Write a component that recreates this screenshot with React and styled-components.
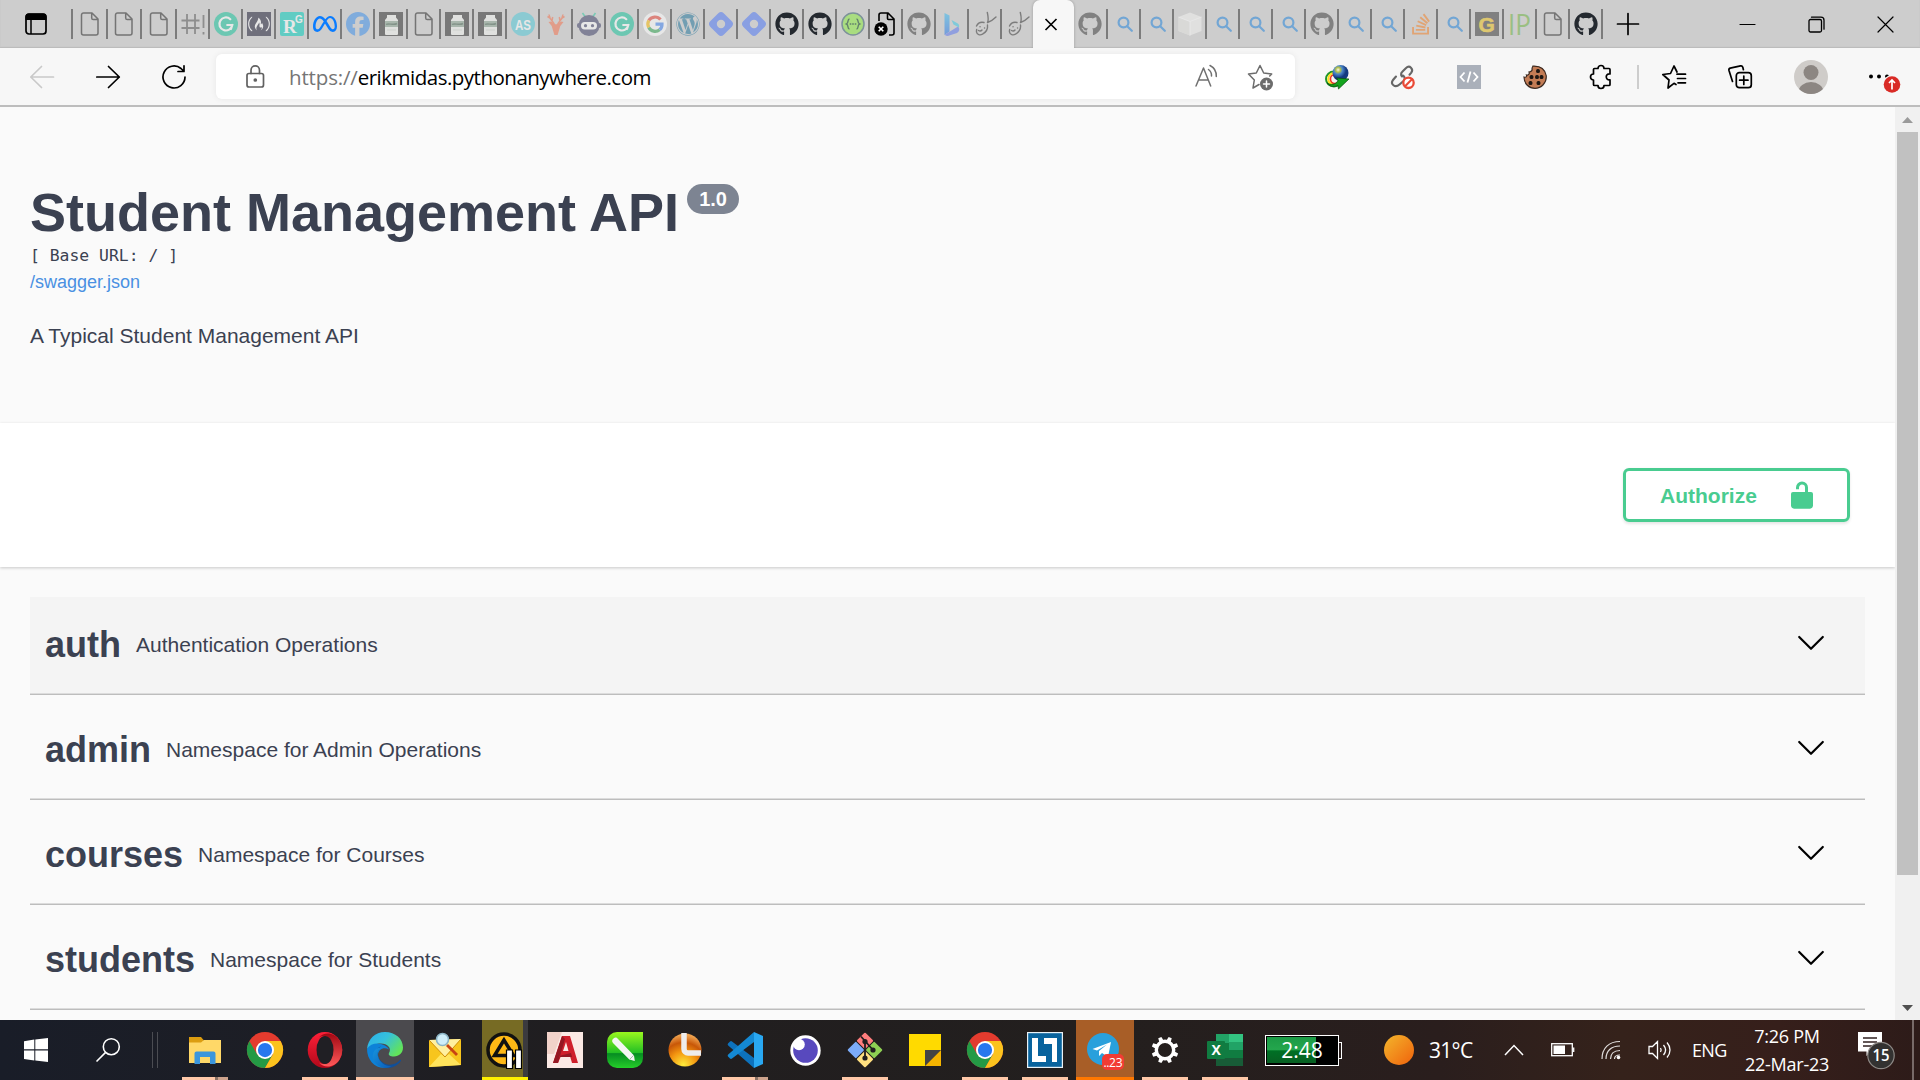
import React from 'react';
import styled, { createGlobalStyle, css } from 'styled-components';
import { FaGithub, FaWordpress, FaFreeCodeCamp, FaStackOverflow, FaFacebook, FaMeta } from 'react-icons/fa6';

const ui = '"Segoe UI", "Open Sans", "Noto Sans", sans-serif';
const arial = '"Liberation Sans", Arial, sans-serif';

const GlobalStyle = createGlobalStyle`
  * { box-sizing: border-box; }
  body { margin: 0; background: #fafafa; overflow: hidden; }
  svg { display: block; flex: none; overflow: visible; }
  button { font: inherit; }
`;

const Screen = styled.div`
  width: 1920px;
  height: 1080px;
  display: flex;
  flex-direction: column;
  overflow: hidden;
  font-family: ${ui};
`;

/* ---------- browser chrome ---------- */
const TabStrip = styled.div`
  height: 48px;
  display: flex;
  align-items: center;
  background: #cdcdcd;
  box-shadow: inset 0 -1px 1px #bbb;
  flex: none;
`;
const Workspace = styled.div`
  width: 71px;
  display: flex;
  padding-left: 24px;
`;
const Tab = styled.div`
  width: ${(p) => p.$w || 33}px;
  height: 30px;
  display: flex;
  align-items: center;
  justify-content: center;
  border-left: ${(p) => (p.$first ? 0 : '2px solid #7c7c7c')};
  flex: none;
  & > * { opacity: ${(p) => (p.$awake ? 1 : 0.52)}; }
`;
const ActiveTab = styled.div`
  width: 41px;
  height: 48px;
  display: flex;
  align-items: center;
  justify-content: center;
  padding-right: 6px;
  background: #f7f7f7;
  border-radius: 7px 7px 0 0;
  box-shadow: 0 0 3px rgba(0, 0, 0, 0.25);
  clip-path: inset(0 -3px 0 -3px);
  flex: none;
`;
const StripEnd = styled.div`
  height: 30px;
  border-left: 2px solid #7c7c7c;
  flex: 1;
  display: flex;
  align-items: center;
  padding: 0 26px 0 13px;
`;
const WindowControls = styled.div`
  margin-left: auto;
  display: flex;
  gap: 52px;
`;
const Toolbar = styled.div`
  height: 59px;
  display: flex;
  align-items: center;
  padding-left: 30px;
  background: #f7f7f7;
  border-bottom: 2px solid #bdbdbd;
  flex: none;
`;
const NavGroup = styled.div`
  display: flex;
  gap: 42px;
  width: 186px;
`;
const AddressBar = styled.div`
  width: 1079px;
  height: 45px;
  display: flex;
  align-items: center;
  background: #fff;
  border-radius: 6px;
  box-shadow: 0 0 6px rgba(0, 0, 0, 0.07);
  padding: 0 22px 0 27px;
`;
const Url = styled.span`
  margin-left: 22px;
  font-size: 20.5px;
  line-height: 28px;
  letter-spacing: -0.5px;
  color: #000;
  white-space: nowrap;
  flex: 1;
`;
const Scheme = styled.span`
  color: #757575;
  letter-spacing: -0.15px;
`;
const BarActions = styled.div`
  display: flex;
  gap: 27px;
`;
const Extensions = styled.div`
  display: flex;
  align-items: center;
  gap: 42px;
  margin-left: 30px;
`;
const Divider = styled.i`
  width: 2px;
  height: 24px;
  background: #cdcdcd;
  margin-left: 24px;
`;
const Profile = styled.div`
  display: flex;
  align-items: center;
  margin-left: 23px;
  gap: 42px;
`;

/* ---------- page ---------- */
const Viewport = styled.div`
  height: 913px;
  display: flex;
  overflow: hidden;
  background: #fafafa;
  flex: none;
`;
const Page = styled.main`
  width: 1895px;
  font-family: ${arial};
  color: #3b4151;
`;
const Info = styled.header`
  height: 316px;
  padding: 75px 30px 0;
`;
const TitleRow = styled.div`
  display: flex;
  align-items: flex-start;
  gap: 8px;
`;
const Title = styled.h1`
  margin: 0;
  font-size: 54px;
  line-height: 60px;
  white-space: nowrap;
`;
const Version = styled.span`
  margin-top: 2px;
  width: 52px;
  height: 30px;
  display: flex;
  align-items: center;
  justify-content: center;
  border-radius: 15px;
  background: #7d8492;
  color: #fff;
  font-size: 20px;
  font-weight: 700;
`;
const BaseUrl = styled.pre`
  margin: 1px 0 0;
  font: 16.4px/25px "DejaVu Sans Mono", monospace;
`;
const SpecLink = styled.a`
  display: block;
  margin-top: 1px;
  font-size: 18px;
  line-height: 27px;
  color: #4990e2;
`;
const Description = styled.p`
  margin: 25px 0 0;
  font-size: 21px;
  line-height: 30px;
`;
const SchemeBox = styled.section`
  height: 144px;
  display: flex;
  align-items: center;
  justify-content: flex-end;
  padding-right: 45px;
  background: #fff;
  box-shadow: 0 1px 3px rgba(0, 0, 0, 0.2);
`;
const Authorize = styled.button`
  width: 227px;
  height: 54px;
  display: flex;
  align-items: center;
  justify-content: space-between;
  padding: 0 34px;
  border: 3px solid #49cc90;
  border-radius: 6px;
  background: transparent;
  box-shadow: 0 1.5px 3px rgba(0, 0, 0, 0.1);
  color: #49cc90;
  font-size: 21px;
  font-weight: 700;
`;
const AuthorizeLabel = styled.span`
  padding-top: 2px;
`;
const Sections = styled.div`
  padding: 30px 30px 0;
  display: flex;
  flex-direction: column;
  gap: 7px;
`;
const Section = styled.div`
  height: 98px;
  display: flex;
  align-items: center;
  gap: 15px;
  padding: 0 41px 2px 15px;
  background: ${(p) => (p.$hover ? '#f4f4f4' : 'transparent')};
  border-bottom: 1px solid #bdbdbd;
  box-shadow: inset 0 -1px 0 #dcdcdc;
  & > svg { margin: 0 0 4px auto; }
`;
const Name = styled.h3`
  margin: 0;
  font-size: 36px;
  line-height: 40px;
`;
const Summary = styled.small`
  font-size: 21px;
  line-height: 26px;
`;
const Scrollbar = styled.div`
  width: 25px;
  padding: 10px 2px 9px;
  display: flex;
  flex-direction: column;
  align-items: center;
  background: #f0f0f0;
`;
const Thumb = styled.div`
  width: 21px;
  height: 743px;
  margin: 9px 0 auto;
  background: #c1c1c1;
`;

/* ---------- taskbar ---------- */
const Taskbar = styled.footer`
  height: 60px;
  display: flex;
  background: linear-gradient(90deg, #191d28 0, #1d1e25 300px, #201e20 560px, #231f1e 1100px, #2a1e1d 1440px, #35221b 1620px, #361f1b 1780px, #2d1b19 1920px);
  color: #fff;
  flex: none;
`;
const StartArea = styled.div`
  width: 175px;
  display: flex;
  align-items: center;
  padding-left: 24px;
  gap: 48px;
`;
const Grip = styled.i`
  width: 6px;
  height: 36px;
  margin-left: -16px;
  border: solid #4b4c52;
  border-width: 0 1.5px;
`;
const AppSlot = styled.div`
  width: 60px;
  display: flex;
  justify-content: center;
  flex: none;
`;
const AppInner = styled.div`
  width: ${(p) => p.$w || 46}px;
  display: flex;
  flex-direction: column;
  align-items: center;
  background: ${(p) => p.$bg || 'transparent'};
  border-bottom: 3px solid ${(p) => p.$line || 'transparent'};
  ${(p) => p.$stack && css`border-image: linear-gradient(90deg, #ffc8a8 32px, #8b7164 32px, #8b7164 34px, #cda38d 34px) 3;`}
  ${(p) => p.$stack && css`border-style: none none solid;`}
  padding-top: 3px;
  & > svg { margin: auto 0; }
`;
const BatteryClock = styled.div`
  width: 77px;
  margin: 0 42px 0 10px;
  display: flex;
  align-items: center;
`;
const BatteryBody = styled.div`
  width: 74px;
  height: 31px;
  border: 1.5px solid #fff;
  padding: 1px;
  background: #000;
  line-height: 26px;
  font-size: 21px;
  text-align: center;
`;
const BatteryFill = styled.div`
  height: 26px;
  background: linear-gradient(90deg, transparent 49px, #000 49px), linear-gradient(#1b9a45, #24a64d 48%, #007025 54%, #075f22);
`;
const BatteryTip = styled.i`
  width: 3px;
  height: 17px;
  border: 1px solid #fff;
  border-left: 0;
`;
const Weather = styled.div`
  display: flex;
  align-items: center;
  gap: 15px;
  width: 120px;
  font-size: 21px;
  letter-spacing: -0.7px;
  line-height: 24px;
`;
const Tray = styled.div`
  display: flex;
  align-items: center;
  gap: 26.5px;
  font-size: 18px;
  & > span { letter-spacing: -0.7px; margin-left: -6px; width: 34px; }
`;
const Clock = styled.div`
  width: 100px;
  margin-left: 11px;
  display: flex;
  flex-direction: column;
  align-items: center;
  font-size: 18px;
  line-height: 28px;
  padding-top: 2px;
  letter-spacing: -0.25px;
  white-space: nowrap;
`;
const Notice = styled.div`
  display: flex;
  align-items: center;
  margin-left: 20px;
`;
const DesktopEdge = styled.i`
  width: 2px;
  margin-left: auto;
  margin-right: 6px;
  background: #776a68;
`;

/* ---------- icons ---------- */
const Ic = ({ s = 24, h, vb, children, ...r }) => (
  <svg width={s} height={h || s} viewBox={vb || `0 0 ${s} ${h || s}`} fill="none" {...r}>{children}</svg>
);
const Line = (p) => <Ic stroke="#000" strokeWidth="1.7" strokeLinecap="round" strokeLinejoin="round" {...p} />;

const FileIcon = () => (
  <Ic stroke="#222" strokeWidth="1.5" strokeLinejoin="round">
    <path d="M5.500.9H14l6 6.200V21a2 2 0 0 1-2 2H5.500a2 2 0 0 1-2-2V2.900a2 2 0 0 1 2-2zM13.700 1v5a1.600 1.600 0 0 0 1.600 1.600H20" />
  </Ic>
);
const HashBang = () => (
  <Ic stroke="#555" strokeWidth="1.8"><path d="M6 2v20M14 2v20M.5 8.500h18M.5 16h18" /><path d="M22.500 3v13M22.500 20v2.500" /></Ic>
);
const Grammarly = () => (
  <Ic><circle cx="12" cy="12" r="12" fill="#15c39a" />
    <path d="M16.300 7.200A6.500 6.500 0 1 0 18.300 13H13.200M18.300 13l-1.300 4" stroke="#fff" strokeWidth="2.200" strokeLinecap="round" /></Ic>
);
const CodeCampBox = styled.span`
  display: flex;
  width: 24px;
  height: 24px;
  align-items: center;
  justify-content: center;
  background: #1b1b32;
  color: #fff;
  font-size: 22px;
`;
const Glyph = styled.span`
  display: flex;
  font-size: ${(p) => p.$size || 24}px;
  color: ${(p) => p.$c};
`;
const ResearchGate = () => (
  <Ic><rect width="24" height="24" rx="2" fill="#00ccbb" />
    <text x="3" y="21" fontFamily="Liberation Serif, serif" fontWeight="700" fontSize="19" fill="#fff">R</text>
    <text x="15" y="10.500" fontFamily="Liberation Sans, sans-serif" fontWeight="700" fontSize="10" fill="#fff">G</text></Ic>
);
const Bottle = () => (
  <Ic><rect width="24" height="24" fill="#2b2b2b" /><path d="M8 3h9v2.500L19 8v14a1 1 0 0 1-1 1H7a1 1 0 0 1-1-1V8l2-2.500z" fill="#f2f4f0" />
    <rect x="6" y="9" width="13" height="6" fill="#8aa391" /><path d="M7 12.500c3-2 7 1.500 11-1" stroke="#3f5f4b" strokeWidth="1.500" /><path d="M8 18h9" stroke="#cfd5cd" /></Ic>
);
const AsIcon = () => (
  <Ic><circle cx="12" cy="12" r="12" fill="#4fc8d8" />
    <text x="4" y="17.500" textLength="16" lengthAdjust="spacingAndGlyphs" fontFamily="Liberation Sans, sans-serif" fontWeight="700" fontSize="15" fill="#fff">AS</text></Ic>
);
const Deer = () => (
  <Ic><path d="M7 9.500l5 3 5-3 2.500.5-3.200 4L13.600 23h-3.200L7.700 14 4.500 10z" fill="#f4714c" />
    <path d="M10 12C9.500 9.500 6 9 5 2.500M6 6L3.500 4.500M8 8.500L8.700 5M14 12c.5-2.500 4-3 5-9.500M18 6l2.500-1.500M16 8.500L15.300 5" stroke="#f4714c" strokeWidth="1.500" /></Ic>
);
const Robot = () => (
  <Ic><path d="M8 4.500L5.500 1M16 4.500L18.500 1" stroke="#2ec9a0" strokeWidth="1.600" /><circle cx="12" cy="13.500" r="10.500" fill="#3c3e66" />
    <rect x="0" y="11" width="24" height="5" rx="2" fill="#3c3e66" /><rect x="4" y="10" width="16" height="7.500" rx="3.700" fill="#fff" />
    <circle cx="8.500" cy="13.700" r="1.600" fill="#3c3e66" /><circle cx="15.500" cy="13.700" r="1.600" fill="#3c3e66" /></Ic>
);
const Google = () => (
  <Ic><circle cx="12" cy="12" r="12" fill="#fff" /><g strokeWidth="3.200"><path d="M17.500 7.600A7.200 7.200 0 0 0 5.800 8.500" stroke="#ea4335" />
    <path d="M5.800 8.500a7.200 7.200 0 0 0 0 7" stroke="#fbbc05" /><path d="M5.800 15.500a7.200 7.200 0 0 0 10.800 2.300" stroke="#34a853" />
    <path d="M12.500 12.200h6.500a7.200 7.200 0 0 1-2.400 5.600" stroke="#4285f4" /></g></Ic>
);
const Hashnode = () => (
  <Ic><path fillRule="evenodd" fill="#4a74f5" d="M9.300 1.200a4 4 0 0 1 5.400 0l8.100 8.100a4 4 0 0 1 0 5.400l-8.100 8.100a4 4 0 0 1-5.400 0L1.200 14.700a4 4 0 0 1 0-5.400zM12 7.800a4.200 4.200 0 1 0 0 8.400 4.200 4.200 0 0 0 0-8.400z" /></Ic>
);
const Swagger = () => (
  <Ic><circle cx="12" cy="12" r="11" fill="#a9dd80" stroke="#7d929a" strokeWidth="1.500" />
    <path d="M8.500 7C6 7 8 11 5.500 12 8 13 6 17 8.500 17M15.500 7c2.500 0 .5 4 3 5-2.500 1-.5 5-3 5" stroke="#62806c" strokeWidth="1.400" />
    <path d="M8.700 12h1.600M11.200 12h1.600M13.700 12h1.600" stroke="#62806c" strokeWidth="1.600" /></Ic>
);
const FileError = () => (
  <Ic><path d="M5 9V3a2 2 0 0 1 2-2h7l6 6v14a2 2 0 0 1-2 2h-3M13.500 1v5.500a1 1 0 0 0 1 1H20" stroke="#000" strokeWidth="1.600" />
    <circle cx="7" cy="17" r="6.700" fill="#000" /><path d="M4.700 14.700l4.600 4.600M9.300 14.700l-4.600 4.600" stroke="#fff" strokeWidth="1.600" /></Ic>
);
const Bing = () => (
  <Ic><defs><linearGradient id="bing" x1="0" y1="0" x2="0" y2="1"><stop stopColor="#37bdf2" /><stop offset="1" stopColor="#2670e8" /></linearGradient></defs>
    <path d="M4.500 1l5 2.500v16L4.500 23z" fill="url(#bing)" /><path d="M4.600 22.700L18 14.500a4 4 0 0 1-1 6.500L10 23.300a5 5 0 0 1-5.400-.6z" fill="#5a76f0" />
    <path d="M11.500 8l5.500 3a4 4 0 0 1 2 4.500l-5.500-3z" fill="#37c9e6" /></Ic>
);
const Carrot = () => (
  <Ic stroke="#333" strokeWidth="1.400" strokeLinecap="round"><path d="M3.500 14C5 11 8 9.800 11 10.500M14.500 13c.5 4-2 7.500-5 9.200-2.500 1.300-5.500.6-6-2.200-.1-1 0-1.700.2-2.500M14.500 10.500c1.500-3 .5-6.500-.2-10M14.500 10.500c3-1 6-3 8.500-5.500" />
    <path d="M7 14.700h.1M11.500 16h.1M5.500 18.500c1.200.8 2.700.5 3.500-.5" /></Ic>
);
const TabSearch = () => <Ic stroke="#2083dc" strokeWidth="2.200" strokeLinecap="round"><circle cx="11.500" cy="10.500" r="4.900" /><path d="M15.200 14.300l4.600 4.500" /></Ic>;
const Cube = () => (
  <Ic><path d="M12 .5L23.500 5v14L12 23.500.5 19V5z" fill="#f3f3f1" /><path d="M12 9.500V23.500L.5 19V5z" fill="#e4e4e2" /><path d="M.5 5L12 9.500 23.500 5M12 9.500v14" stroke="#fff" /></Ic>
);
const Geeks = () => (
  <Ic><rect width="24" height="24" fill="#3a3a3a" /><text x="3.500" y="19.500" fontFamily="Liberation Sans, sans-serif" fontWeight="700" fontSize="21" fill="#efc31b" stroke="#efc31b" strokeWidth=".6">G</text></Ic>
);
const IpIcon = () => (
  <Ic><text x="0" y="22.500" textLength="23" lengthAdjust="spacingAndGlyphs" fontFamily="Open Sans, sans-serif" fontSize="30" fill="#6db33f">IP</text></Ic>
);
const Gh = ({ dark }) => <Glyph $c={dark ? '#24292f' : '#3c3c3c'}><FaGithub /></Glyph>;

const tabsBefore = [
  [<FileIcon />, 0, 35], [<FileIcon />, 0, 34], [<FileIcon />, 0, 35], [<HashBang />], [<Grammarly />],
  [<CodeCampBox><FaFreeCodeCamp /></CodeCampBox>], [<ResearchGate />], [<Glyph $c="#0a7cff"><FaMeta /></Glyph>, 1],
  [<Glyph $c="#3b8eea"><FaFacebook /></Glyph>], [<Bottle />], [<FileIcon />], [<Bottle />], [<Bottle />], [<AsIcon />], [<Deer />],
  [<Robot />], [<Grammarly />], [<Google />], [<Glyph $c="#21759b"><FaWordpress /></Glyph>], [<Hashnode />], [<Hashnode />],
  [<Gh dark />, 1], [<Gh dark />, 1], [<Swagger />, 1], [<FileError />, 1], [<Gh />], [<Bing />], [<Carrot />], [<Carrot />],
];
const tabsAfter = [
  [<Gh />, 0, 32], [<TabSearch />], [<TabSearch />], [<Cube />], [<TabSearch />], [<TabSearch />], [<TabSearch />], [<Gh />],
  [<TabSearch />], [<TabSearch />], [<Glyph $c="#f48024"><FaStackOverflow /></Glyph>], [<TabSearch />], [<Geeks />], [<IpIcon />],
  [<FileIcon />], [<Gh dark />, 1],
];

const Chrome = () => (
  <Ic s={36} vb="0 0 48 48"><circle cx="24" cy="24" r="24" fill="#e33b2e" />
    <path d="M3.200 12A24 24 0 0 0 24 48l10.400-18L24 36 13.600 30z" fill="#249a45" /><path d="M24 48a24 24 0 0 0 20.800-36H24l10.400 18z" fill="#fcc31e" />
    <circle cx="24" cy="24" r="12" fill="#fff" /><circle cx="24" cy="24" r="9.500" fill="#2877ee" /></Ic>
);
const Opera = () => (
  <Ic s={36}><defs><linearGradient id="op1" x1="0" y1="0" x2="0" y2="1"><stop stopColor="#ff2038" /><stop offset="1" stopColor="#b0081a" /></linearGradient>
    <linearGradient id="op2" x1="0" y1="0" x2="0" y2="1"><stop stopColor="#a00712" /><stop offset="1" stopColor="#ff5a5a" /></linearGradient></defs>
    <ellipse cx="18" cy="18" rx="17.300" ry="18" fill="url(#op1)" /><path d="M12 5.500C17-1 28 .5 32.500 8.500a19 19 0 0 1 0 19C28 35.500 17 37 12 30.500c9 5 14-3 14-12.500S21 .5 12 5.500z" fill="url(#op2)" />
    <ellipse cx="18" cy="18" rx="8.500" ry="14" fill="#201f24" /></Ic>
);
const Edge = () => (
  <Ic s={36}><defs><linearGradient id="ed1" x1="0" y1="0" x2="1" y2=".6"><stop stopColor="#2aaeea" /><stop offset=".5" stopColor="#35c1dc" /><stop offset="1" stopColor="#62e35a" /></linearGradient>
    <linearGradient id="ed2" x1="0" y1="0" x2="1" y2="1"><stop stopColor="#1794dd" /><stop offset="1" stopColor="#0a5cb8" /></linearGradient></defs>
    <path d="M0 17C1 7 8 0 18 0c10.500 0 18 7 18 15.500C36 21 32 24.500 27 24.500c-4 0-6-1.500-5-3.500 3-5-1.500-9.500-8-9.500C8 11.500 3 14 0 17z" fill="url(#ed1)" />
    <path d="M0 17c3-5 9-6.500 14-5 4 1 7 3 8 5.500-5-3-10.500-.5-11 5C10.700 29 17 34 24 34.500 11 39.500 0 30 0 17z" fill="#0d82d8" />
    <path d="M14 14.500c-4 3-4.500 10 0 14.500 5 5 14 5 19-1 .8-.8 1.300.1.800 1C30.500 34 24 37 17 35.500 9 33 5.500 26 8 20c1.200-3 3.500-5 6-5.500z" fill="#114f98" />
    <path d="M15 15.500c-3.500 1.500-5 5-4 9 1.500 6 7.500 10 13.500 9.700-2.300 1.500-5.500 1.900-8 1.500C8 34 4 27 6.500 20.500 8 17 11 15 15 15.500z" fill="url(#ed2)" /></Ic>
);
const Folder = () => (
  <Ic s={32} h={27}><path d="M0 0h12l3 3.500V8H0z" fill="#dc9d10" /><path d="M0 5.500h12l3-2.500h17v23H0z" fill="#ffd868" /><path d="M5.500 27V16.500a2 2 0 0 1 2-2h17a2 2 0 0 1 2 2V27H21v-7h-10v7z" fill="#3b96dc" /></Ic>
);
const MailSearch = () => (
  <Ic s={36}><path d="M2 8l32-1v26l-32 2z" fill="#f7c51d" /><path d="M2 35l12-13 4 3 4-3 12 11z" fill="#ffe45c" /><path d="M2 8l16 17L34 7" stroke="#d08e08" fill="#fff0a0" />
    <path d="M20 13l10 10" stroke="#c84313" strokeWidth="2.800" /><circle cx="15.500" cy="7.500" r="6" fill="#cfeefa" stroke="#8bb3c4" strokeWidth="1.600" /></Ic>
);
const PausedApp = () => (
  <Ic s={46} h={38}><circle cx="22" cy="19" r="16" fill="#ffb915" stroke="#111" strokeWidth="3.500" /><path d="M22 9L12.500 24.500h19z" fill="#ffb915" stroke="#111" strokeWidth="3.500" />
    <path d="M24.500 19h6v18.500h-6zM33.500 19h6v18.500h-6z" fill="#fff" stroke="#000" strokeWidth="1.200" /></Ic>
);
const Autocad = () => (
  <Ic s={36}><rect width="36" height="36" fill="#fbe9e4" /><path d="M0 0h15L7 22H0z" fill="#f1d2c9" /><path d="M6 31L15 4h8l8 27h-6l-2-7H14l-3 7zM16 19h5.500L19 10z" fill="#cf1f2b" fillRule="evenodd" />
    <path d="M15 4L6 31h5l7-24zM12 24l12-3 1 4H13z" fill="#951823" /></Ic>
);
const Corel = () => (
  <Ic s={36}><defs><linearGradient id="cd" x1="0" y1="0" x2="0" y2="1"><stop stopColor="#99f71e" /><stop offset=".58" stopColor="#22bf25" /><stop offset=".6" stopColor="#068c22" /><stop offset="1" stopColor="#25ce29" /></linearGradient></defs>
    <path d="M10 0h26v26a10 10 0 0 1-10 10H10A10 10 0 0 1 0 26V10A10 10 0 0 1 10 0z" fill="url(#cd)" /><path d="M6 11a3 3 0 0 1 5-4l16 16.500.8 5.500-5.500-1.500z" fill="#f4f6f4" /><path d="M23 27l4-4" stroke="#a9bba9" /></Ic>
);
const OrangeClock = () => (
  <Ic s={34}><defs><radialGradient id="oc" cx=".45" cy=".95" r=".9"><stop stopColor="#ffec3c" /><stop offset=".45" stopColor="#f39410" /><stop offset=".75" stopColor="#c85708" /><stop offset="1" stopColor="#eea04c" /></radialGradient></defs>
    <circle cx="17" cy="17" r="16.500" fill="url(#oc)" /><path d="M16 0v16a4 4 0 0 0 4 4H33" stroke="#eeeceb" strokeWidth="5.500" /></Ic>
);
const VsCode = () => (
  <Ic s={36}><path d="M1 11.500l2-2a1.500 1.500 0 0 1 2 0L27 26v10L1.200 13.500a1.500 1.500 0 0 1-.2-2z" fill="#0d72bd" /><path d="M1 24.500l2 2a1.500 1.500 0 0 0 2 0L27 10V0L1.200 22.500a1.500 1.500 0 0 0-.2 2z" fill="#1489d3" />
    <path d="M27 0l9 4v28l-9 4z" fill="#29a8f2" /></Ic>
);
const Insomnia = () => (
  <Ic s={31}><circle cx="15.500" cy="15.500" r="15.200" fill="#fff" /><circle cx="15.500" cy="15.500" r="12.300" fill="#5849be" /><circle cx="9" cy="9.500" r="5.800" fill="#fff" /></Ic>
);
const Git = () => (
  <Ic s={36}><g transform="rotate(45 18 18)"><rect x="5.500" y="5.500" width="12" height="12" rx="1" fill="#ff7d7d" /><rect x="18.500" y="5.500" width="12" height="12" rx="1" fill="#8ed053" />
    <rect x="5.500" y="18.500" width="12" height="12" rx="1" fill="#7cacf8" /><rect x="18.500" y="18.500" width="12" height="12" rx="1" fill="#ffe080" /></g>
    <path d="M14 4.500l4 4.500v17M18 9l8 9" stroke="#211e1f" strokeWidth="1.800" /><circle cx="18" cy="9.500" r="2.600" fill="#211e1f" /><circle cx="26" cy="18" r="2.600" fill="#211e1f" /><circle cx="18" cy="26" r="2.600" fill="#211e1f" /></Ic>
);
const Sticky = () => <Ic s={32}><path d="M0 0h32v16H16v16H0z" fill="#ffda00" /><path d="M16 16h16L16 32z" fill="#444" /><path d="M32 16v16H16z" fill="#f5b400" /></Ic>;
const LApp = () => (
  <Ic s={36}><rect x=".6" y=".6" width="34.800" height="34.800" fill="#08639d" stroke="#e9f2f7" strokeWidth="1.200" /><path d="M5 6h6v18h8v6H5zM17 6h13v24h-5V12h-8z" fill="#fff" /></Ic>
);
const Telegram = () => (
  <Ic s={38}><circle cx="17" cy="18" r="16" fill="#29a0dc" /><path d="M6.500 18L25 11l-3 15-6-4-3 3v-5l8-6.500-10 6z" fill="#fff" />
    <rect x="16" y="23" width="22" height="16" rx="5" fill="#f23c34" /><text x="17.500" y="35.500" textLength="19" fontFamily="Open Sans, sans-serif" fontSize="12" fill="#fff">..23</text></Ic>
);
const Gear = () => (
  <Ic s={28}><circle cx="14" cy="14" r="8.700" stroke="#fff" strokeWidth="3.400" />
    {[22.5, 67.5, 112.5, 157.5, 202.5, 247.5, 292.5, 337.5].map((a) => <path key={a} d="M11.700 5l.6-4.500h3.400l.6 4.500z" fill="#fff" transform={`rotate(${a} 14 14)`} />)}</Ic>
);
const Excel = () => (
  <Ic s={36} h={32}><path d="M9 0h13v9H9z" fill="#22a366" /><path d="M22 0h14v9H22z" fill="#33c481" /><path d="M9 9h13v15H9z" fill="#107c41" /><path d="M22 8h14v8H22z" fill="#21a366" /><path d="M22 16h14v8H22z" fill="#107c41" /><path d="M9 24h27v8H9z" fill="#185c37" />
    <rect y="7" width="18" height="18" rx="1" fill="#107c41" /><text x="4.500" y="21" fontFamily="Open Sans, sans-serif" fontWeight="700" fontSize="14" fill="#fff">X</text></Ic>
);

const peach = '#ffc8a8';
const apps = [
  { icon: <Folder />, line: peach, stack: true }, { icon: <Chrome /> }, { icon: <Opera />, line: peach },
  { icon: <Edge />, w: 58, bg: '#4b4a4e', line: peach }, { icon: <MailSearch /> },
  { icon: <PausedApp />, bg: 'linear-gradient(90deg, #776b24 41px, #3b3a3e 41px)', line: '#fff000' },
  { icon: <Autocad /> }, { icon: <Corel /> }, { icon: <OrangeClock /> }, { icon: <VsCode />, line: peach, stack: true },
  { icon: <Insomnia /> }, { icon: <Git />, line: peach }, { icon: <Sticky /> }, { icon: <Chrome />, line: peach },
  { icon: <LApp />, line: peach }, { icon: <Telegram />, w: 58, bg: '#a85e27', line: '#ff7800' },
  { icon: <Gear />, line: peach }, { icon: <Excel />, line: peach },
];

const sections = [
  ['auth', 'Authentication Operations'],
  ['admin', 'Namespace for Admin Operations'],
  ['courses', 'Namespace for Courses'],
  ['students', 'Namespace for Students'],
];

const renderTab = (skipFirst) => ([icon, awake, w], i) => (
  <Tab key={i} $awake={awake} $w={w} $first={skipFirst && i === 0}>{icon}</Tab>
);

function BrowserTop() {
  return (
    <>
      <TabStrip>
        <Workspace>
          <Ic><rect x="2" y="2" width="20" height="20" rx="3" stroke="#000" strokeWidth="1.700" /><path d="M1.500 8V4.500a3 3 0 0 1 3-3h15a3 3 0 0 1 3 3V8z" fill="#000" /><path d="M7 8v14" stroke="#000" strokeWidth="1.500" /></Ic>
        </Workspace>
        {tabsBefore.map(renderTab(false))}
        <ActiveTab><Line s={14} strokeLinecap="butt"><path d="M1.500 2l11 11M12.500 2L1.500 13" /></Line></ActiveTab>
        {tabsAfter.map(renderTab(true))}
        <StripEnd>
          <Line><path d="M12 1.500v21M1.500 12h21" /></Line>
          <WindowControls>
            <Line s={17} strokeWidth="1.200"><path d="M1 8.500h15" /></Line>
            <Line s={17} strokeWidth="1.300"><rect x="1" y="3.500" width="12.500" height="12.500" rx="1.500" /><path d="M3.500 1.200H13a3 3 0 0 1 3 3v9" /></Line>
            <Line s={17} strokeWidth="1.200"><path d="M1 1l15 15M16 1L1 16" /></Line>
          </WindowControls>
        </StripEnd>
      </TabStrip>
      <Toolbar>
        <NavGroup>
          <Line stroke="#c9c9c9"><path d="M23.500 12H.8M11.500 1.500L.8 12l10.700 10.500" /></Line>
          <Line><path d="M.8 12h22.500M12.500 1.500L23.300 12 12.500 22.500" /></Line>
          <Line><path d="M23 12a11 11 0 1 1-4-8.500l2.800 2.700M22 .8v5.700h-6" /></Line>
        </NavGroup>
        <AddressBar>
          <Line stroke="#616161"><rect x="4" y="8.500" width="16.500" height="13.500" rx="2" /><path d="M8 8.500V5.200a4.200 4.200 0 0 1 8.500 0v3.300" /><circle cx="12.300" cy="15" r="1" fill="#616161" /></Line>
          <Url><Scheme>https://</Scheme>erikmidas.pythonanywhere.com</Url>
          <BarActions>
            <Line s={26} stroke="#707070" strokeWidth="1.500"><path d="M2 22L9.500 4l7.200 18M4.700 16h9.500M14.500 5.500c2 1.500 3.200 4 3 6.500M16 1.500c4 2 6.500 6 6.300 11" /></Line>
            <Line s={26} stroke="#6c6c6c" strokeWidth="1.500"><path d="M12 20.500l-6 3.500 1.300-8L1.500 10l7.800-1L13 1.500l3.700 7.500 8 1-2 2" /><circle cx="19.500" cy="20" r="6.500" fill="#6c6c6c" stroke="none" /><path d="M19.500 17v6M16.500 20h6" stroke="#fff" /></Line>
          </BarActions>
        </AddressBar>
        <Extensions>
          <Ic><defs><radialGradient id="globe" cx=".35" cy=".3"><stop stopColor="#f3f7e8" /><stop offset=".3" stopColor="#b3bf4a" /><stop offset=".55" stopColor="#4b86c9" /><stop offset="1" stopColor="#143a80" /></radialGradient></defs>
            <ellipse cx="9" cy="14" rx="8" ry="7.500" fill="#f7f7f7" stroke="#21952c" strokeWidth="2" /><ellipse cx="9.500" cy="14" rx="6.300" ry="6" stroke="#ffe21a" strokeWidth="2" /><ellipse cx="10" cy="14" rx="4.600" ry="4.500" stroke="#ee3a20" strokeWidth="1.700" />
            <circle cx="15.500" cy="8" r="8" fill="url(#globe)" />
            <path d="M2 18c4 2.500 9 1.500 11-2.500l-1.500-2.500L24 14 13.500 24l-.5-3.500C8 22.500 4 21 2 18z" fill="#14a41d" stroke="#0a4a10" strokeWidth=".7" /></Ic>
          <Ic stroke="#666" strokeWidth="2.100" strokeLinecap="round"><path d="M11 11.500c-1.500-1.500-1-3.500.3-4.700l3.500-3.600c4-3.700 8 .8 5.500 4.500l-1.800 2M11.800 10.500c2.500 1.500 2.300 4 .7 5.500L8.500 19.500C4 23.500-1 19 2 15l3-3.500" /><circle cx="17.500" cy="17.800" r="5.200" fill="#fff" stroke="#ea4a37" strokeWidth="2.300" /><path d="M14.300 21l6.400-6.400" stroke="#ea4a37" /></Ic>
          <Ic><rect width="24" height="24" fill="#aab0ba" /><path d="M7.500 7.500L3.500 12l4 4.500M16.500 7.500l4 4.500-4 4.500M13.500 6.500l-3 11" stroke="#fff" strokeWidth="1.800" /></Ic>
          <Ic><path d="M10 1c2 .3 11-1.500 13.200 9.500C24 18 18 23.300 12 23.300S1.200 19 1 12c2 .7 3-.3 2.500-2C5 10.500 7 9 6 7c2-.2 3.500-1.500 3-3C9 3 9.300 2 10 1z" fill="#c37c55" stroke="#3c2a21" strokeWidth="1.200" />
            {[[15, 6], [18.5, 12], [8.5, 12], [14, 12], [7.5, 18], [15.5, 18]].map(([x, y]) => <rect key={`${x}-${y}`} x={x - 1.9} y={y - 1.9} width="3.800" height="3.800" rx="1.500" fill="#1d1713" />)}</Ic>
          <Line><path d="M9 3.500a3 3 0 0 1 6 0h5a1 1 0 0 1 1 1V9c-5-.8-5 6.500 0 5.800v4.700a1 1 0 0 1-1 1h-5a3 3 0 0 1-6 0H5.500a1 1 0 0 1-1-1V15a3 3 0 0 1 0-6V4.500a1 1 0 0 1 1-1z" /></Line>
        </Extensions>
        <Divider />
        <Profile>
          <Line><path d="M15 9.200h8.500M15.500 13.500h8M16 17.800h7.500M14 19.500L12 18.300 6 23l1-8L.8 9.500 8.500 8.500 12 1l3 6" /></Line>
          <Line><path d="M4.500 16.500L1 5.500a2 2 0 0 1 1.200-2.400L12.500.9a2 2 0 0 1 2.300 1.300l.6 2.500" /><rect x="8.300" y="7.700" width="15" height="15" rx="3" /><path d="M15.800 11v8.400M11.600 15.200H20" /></Line>
          <Ic s={34}><defs><clipPath id="av"><circle cx="17" cy="17" r="17" /></clipPath></defs><g clipPath="url(#av)"><rect width="34" height="34" fill="#cfccc9" /><circle cx="17" cy="12.500" r="7.500" fill="#8c8682" /><ellipse cx="17" cy="32" rx="12.500" ry="10" fill="#8c8682" /></g></Ic>
          <Ic s={32} h={34}><g fill="#000"><circle cx="1" cy="16.500" r="2" /><circle cx="9" cy="16.500" r="2" /><circle cx="17" cy="16.500" r="2" /></g><circle cx="22" cy="24.500" r="9.500" fill="#f7f7f7" /><circle cx="22" cy="24.500" r="8.300" fill="#d92b26" /><path d="M22 29.500v-9M19 23l3-3 3 3" stroke="#fff" strokeWidth="1.700" /></Ic>
        </Profile>
      </Toolbar>
    </>
  );
}

function SwaggerPage() {
  return (
    <Viewport>
      <Page>
        <Info>
          <TitleRow><Title>Student Management API</Title><Version>1.0</Version></TitleRow>
          <BaseUrl>[ Base URL: / ]</BaseUrl>
          <SpecLink>/swagger.json</SpecLink>
          <Description>A Typical Student Management API</Description>
        </Info>
        <SchemeBox>
          <Authorize>
            <AuthorizeLabel>Authorize</AuthorizeLabel>
            <Ic s={22} h={28}><path d="M6.500 8.200V6.500a4.500 4.500 0 0 1 9 0V12" stroke="#49cc90" strokeWidth="3" /><path d="M2 11h18a2 2 0 0 1 2 2v11.500a3.500 3.500 0 0 1-3 3.200H3a3.500 3.500 0 0 1-3-3.200V13a2 2 0 0 1 2-2z" fill="#49cc90" /></Ic>
          </Authorize>
        </SchemeBox>
        <Sections>
          {sections.map(([name, text], i) => (
            <Section key={name} $hover={i === 0}>
              <Name>{name}</Name>
              <Summary>{text}</Summary>
              <Line s={26} h={16} strokeWidth="2.200"><path d="M1.200 2L13 13.800 24.800 2" /></Line>
            </Section>
          ))}
        </Sections>
      </Page>
      <Scrollbar>
        <Ic s={11} h={6}><path d="M0 6L5.500 0 11 6z" fill="#9a9a9a" /></Ic>
        <Thumb />
        <Ic s={11} h={6}><path d="M0 0h11L5.500 6z" fill="#505050" /></Ic>
      </Scrollbar>
    </Viewport>
  );
}

function WindowsTaskbar() {
  return (
    <Taskbar>
      <StartArea>
        <Ic><path d="M0 3.300L10.300 1.500V11.300H0zM11.300 1.400L24 0v11.300H11.300zM0 12.400h10.300v10L0 21zM11.300 12.400H24V24l-12.700-1.500z" fill="#fff" /></Ic>
        <Ic stroke="#fff" strokeWidth="1.600"><circle cx="15.300" cy="8.700" r="8" /><path d="M9.600 14.400L.5 23.500" /></Ic>
        <Grip />
      </StartArea>
      {apps.map((a, i) => (
        <AppSlot key={i}><AppInner $w={a.w} $bg={a.bg} $line={a.line} $stack={a.stack}>{a.icon}</AppInner></AppSlot>
      ))}
      <BatteryClock><BatteryBody><BatteryFill>2:48</BatteryFill></BatteryBody><BatteryTip /></BatteryClock>
      <Weather>
        <Ic s={30}><defs><linearGradient id="sun" x1="0" y1="0" x2="1" y2="1"><stop stopColor="#f3b62c" /><stop offset="1" stopColor="#f0620c" /></linearGradient></defs><circle cx="15" cy="15" r="15" fill="url(#sun)" /></Ic>
        31°C
      </Weather>
      <Tray>
        <Ic s={20} h={12} stroke="#fff" strokeWidth="1.500"><path d="M1 11l9-9.500L19 11" /></Ic>
        <Ic s={24} h={14} stroke="#fff" strokeWidth="1.300"><rect x=".7" y=".7" width="20.600" height="12" /><path d="M22.700 4.500v4.500" /><path d="M2.500 2.500H14v8.500H2.500z" fill="#fff" stroke="none" /></Ic>
        <Ic s={20} h={20} stroke="#fff" strokeWidth="1.200"><path d="M1 19C1 8 8 1.500 19 1.500M5 19C5 11 10 6 19 6M9.500 19c0-5 3-8.500 9.500-8.500M13.500 19c0-2.500 2-4 5.500-4" opacity=".85" /><circle cx="17.500" cy="17.500" r="1.800" fill="#fff" stroke="none" /></Ic>
        <Ic s={24} h={20} stroke="#fff" strokeWidth="1.300"><path d="M1 6.500h3.500L9.500 1.500v17l-5-5H1zM12.500 8c.8 1.200.8 2.800 0 4M15.500 5c2.500 3 2.500 7 0 10M19 2.500c4 4.500 4 10.500 0 15" /></Ic>
        <span>ENG</span>
      </Tray>
      <Clock><span>7:26 PM</span><span>22-Mar-23</span></Clock>
      <Notice>
        <Ic s={38} h={38}><path d="M0 0h24v19.500H13L8.500 24v-4.500H0z" transform="translate(1 1)" fill="#fff" /><path d="M6 7h14M6 11h14M6 15h9" stroke="#302020" strokeWidth="1.300" />
          <circle cx="24" cy="24.500" r="13.200" fill="#333231" stroke="#8d8986" strokeWidth="1.200" /><text x="15.500" y="30" textLength="17" lengthAdjust="spacingAndGlyphs" fontFamily="Open Sans, sans-serif" fontWeight="600" fontSize="16" fill="#fff">15</text></Ic>
      </Notice>
      <DesktopEdge />
    </Taskbar>
  );
}

export default function App() {
  return (
    <Screen>
      <GlobalStyle />
      <BrowserTop />
      <SwaggerPage />
      <WindowsTaskbar />
    </Screen>
  );
}
